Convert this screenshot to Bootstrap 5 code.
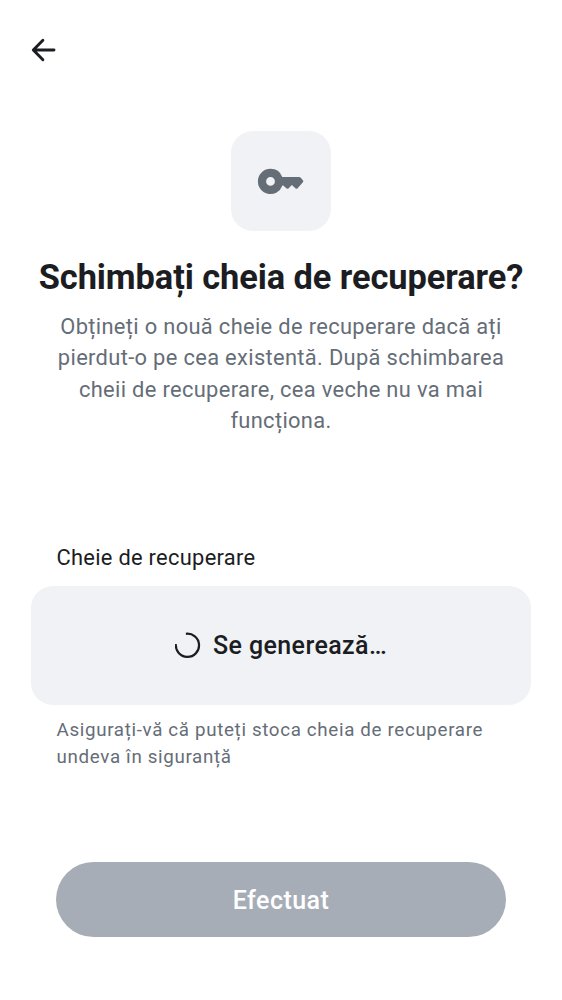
<!DOCTYPE html>
<html lang="ro">
<head>
<meta charset="utf-8">
<meta name="viewport" content="width=device-width, initial-scale=1">
<title>Cheie de recuperare</title>
<link href="https://cdn.jsdelivr.net/npm/bootstrap@5.3.0/dist/css/bootstrap.min.css" rel="stylesheet">
<style>
body{font-family:Roboto,"Liberation Sans",sans-serif;color:#1b1d22;background:#fff}
.screen{height:1000px;padding:0 31px}
.top-bar{height:100px}
.icon-tile{width:100px;height:100px;border-radius:22px;background:#f0f2f5;margin-top:31px}
.heading{font-size:34.4px;line-height:44px;font-weight:700;letter-spacing:-.08px;margin:24px -20px 0;white-space:nowrap}
.intro{font-size:21.875px;line-height:31.25px;letter-spacing:.34px;color:#656d77;margin-top:12px}
.field-label{font-size:21.875px;line-height:31px;letter-spacing:.3px;margin:106px 0 0 25.4px}
.key-box{height:118.5px;border-radius:22px;background:#f0f2f5;margin-top:13px;font-size:25px;font-weight:500;letter-spacing:.4px}
.hint{font-size:18.75px;line-height:26.6px;letter-spacing:.66px;color:#656d77;margin:12.7px 25px 0 25.6px}
.done-btn,.done-btn:disabled{height:75px;margin:91.8px 25px 0;padding-top:8px;background:#a6adb7;color:#fff;opacity:1;font-size:25px;font-weight:500;letter-spacing:.48px}
</style>
<script src="https://cdn.jsdelivr.net/npm/bootstrap@5.3.0/dist/js/bootstrap.bundle.min.js" defer></script>
</head>
<body>
<main class="screen d-flex flex-column">
  <header class="top-bar d-flex align-items-center">
    <a href="#" aria-label="Înapoi" class="d-flex text-reset"><svg width="26" height="26" viewBox="0.3 0 26 26" fill="none" stroke="currentColor" stroke-width="2.9" stroke-linecap="round" stroke-linejoin="round"><path d="M23.3 13H3M12.2 3.2L2.6 13l9.6 9.8"/></svg></a>
  </header>
  <div class="icon-tile align-self-center flex-shrink-0">
    <svg class="d-block" width="100" height="100" viewBox="231 131 100 100" fill="#656d77"><path fill-rule="evenodd" d="M270.5 168.8A12.6 12.6 0 0 1 282.3 177.1H299.3Q300 177.1 300.5 177.6L302.9 180.3Q303.8 181.3 302.9 182.3L297.6 188.2Q296.5 189.4 295.4 188.3L291.8 184.9L288.7 188.2Q287.6 189.4 286.4 188.3L283.2 185.5H282.4A12.6 12.6 0 1 1 270.5 168.8ZM270.5 177A4.4 4.4 0 1 0 270.5 185.8A4.4 4.4 0 1 0 270.5 177Z"/></svg>
  </div>
  <h1 class="heading text-center">Schimbați cheia de recuperare?</h1>
  <p class="intro text-center mb-0">Obțineți o nouă cheie de recuperare dacă ați<br>pierdut-o pe cea existentă. După schimbarea<br>cheii de recuperare, cea veche nu va mai<br>funcționa.</p>
  <div class="field-label">Cheie de recuperare</div>
  <div class="key-box d-flex align-items-center justify-content-center flex-shrink-0" role="status">
    <svg class="me-2" width="30" height="30" viewBox="2.6 -0.7 30 30" fill="none" stroke="currentColor" stroke-width="2.2"><path d="M13.5 3.1A11.6 11.6 0 1 1 3.5 13.4"/></svg>
    <span>Se generează…</span>
  </div>
  <p class="hint mb-0">Asigurați-vă că puteți stoca cheia de recuperare<br>undeva în siguranță</p>
  <button class="btn rounded-pill border-0 done-btn flex-shrink-0" type="button" disabled>Efectuat</button>
</main>
</body>
</html>
